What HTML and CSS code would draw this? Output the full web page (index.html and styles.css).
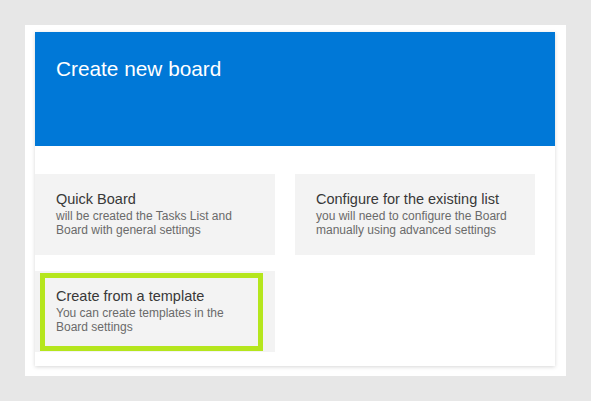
FILE: index.html
```html
<!DOCTYPE html>
<html>
<head>
<meta charset="utf-8">
<link rel="stylesheet" href="styles.css">
</head>
<body>
<div class="frame">
  <div class="card">
    <div class="header">
      <h1 class="header-title">Create new board</h1>
    </div>
    <div class="options">
      <div class="tile">
        <div class="tile-title">Quick Board</div>
        <div class="tile-desc">will be created the Tasks List and Board with general settings</div>
      </div>
      <div class="tile">
        <div class="tile-title">Configure for the existing list</div>
        <div class="tile-desc">you will need to configure the Board manually using advanced settings</div>
      </div>
      <div class="tile tile-highlighted">
        <div class="tile-title">Create from a template</div>
        <div class="tile-desc">You can create templates in the Board settings</div>
        <div class="highlight"></div>
      </div>
    </div>
  </div>
</div>
</body>
</html>
```
FILE: styles.css
```css
html, body {
  margin: 0;
  padding: 0;
}
body {
  background: #e7e7e7;
  padding: 25px;
  font-family: "Liberation Sans", Arial, sans-serif;
}
.frame {
  background: #ffffff;
  width: 541px;
  height: 351px;
  box-sizing: border-box;
  padding: 7px 11px 0 10px;
}
.card {
  background: #ffffff;
  box-shadow: 0 1px 4px rgba(0, 0, 0, 0.16);
  width: 520px;
}
.header {
  background: #0078d7;
  height: 114px;
  box-sizing: border-box;
  padding: 24px 0 0 21px;
}
.header-title {
  margin: 0;
  color: #ffffff;
  font-weight: normal;
  font-size: 20.8px;
  line-height: 26px;
}
.options {
  display: grid;
  grid-template-columns: 240px 240px;
  column-gap: 20px;
  row-gap: 16px;
  padding: 28px 20px 14px 0;
}
.tile {
  position: relative;
  background: #f3f3f3;
  height: 81px;
  box-sizing: border-box;
  padding: 15px 20px 0 21px;
}
.tile-title {
  color: #383838;
  font-size: 14.5px;
  line-height: 20px;
}
.tile-desc {
  color: #6a6a6a;
  font-size: 12px;
  line-height: 14px;
}
.highlight {
  position: absolute;
  left: 5px;
  top: 2px;
  width: 223px;
  height: 78px;
  box-sizing: border-box;
  border: 5px solid #b5e61d;
}
```
